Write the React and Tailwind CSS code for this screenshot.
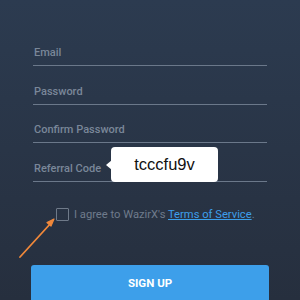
import React, { useState } from 'react';

const fields = ['Email', 'Password', 'Confirm Password', 'Referral Code'];

const App = () => {
    const [agreed, setAgreed] = useState(false);

    return (
        <div
            className="relative w-[300px] h-[300px] overflow-hidden bg-gradient-to-b from-[#2c3b50] to-[#262f3e]"
            style={{ fontFamily: 'Roboto, "Liberation Sans", sans-serif' }}
        >
            <div className="flex flex-col px-[33px] pt-[46px] gap-[18.5px]">
                {fields.map((f) => (
                    <div key={f} className="border-b border-[#6b788a] pb-[5px]">
                        <span className="block text-[11px] leading-[14px] font-medium text-[#7a8799] pl-px">{f}</span>
                    </div>
                ))}
            </div>

            <div className="flex items-center mt-[26px] ml-[56px] gap-[5px]">
                <button
                    type="button"
                    onClick={() => setAgreed(!agreed)}
                    className="w-[13px] h-[13px] border-[1.5px] border-[#6f7a89] rounded-[1px]"
                />
                <span className="text-[11.2px] leading-[14px] text-[#6f7b8c]">
                    I agree to WazirX's{' '}
                    <a href="#" className="text-[#3d9fea] underline">Terms of Service</a>
                    <span className="text-[#6f7b8c]">.</span>
                </span>
            </div>

            <div className="px-[31px] mt-[43px]">
                <button
                    type="button"
                    className="w-full h-[38px] rounded-[3px] bg-[#3d9fea] text-white text-[11.5px] font-bold"
                >
                    SIGN UP
                </button>
            </div>

            {/* referral code tooltip */}
            <div className="absolute left-[111px] top-[147px] w-[107px] h-[35px] bg-white rounded-[4px] flex items-center justify-center">
                <div className="absolute -left-[5px] top-[13px] w-0 h-0 border-y-[5px] border-y-transparent border-r-[6px] border-r-white" />
                <span
                    className="text-[16.5px] text-[#111]"
                    style={{ fontFamily: '"Liberation Sans", Arial, sans-serif' }}
                >
                    tcccfu9v
                </span>
            </div>

            {/* orange pointer arrow */}
            <svg className="absolute left-0 top-0" width="300" height="300" viewBox="0 0 300 300">
                <line x1="20" y1="257" x2="51" y2="223" stroke="#f0883a" strokeWidth="1.8" strokeLinecap="round" />
                <path d="M54 219 L47 222.5 L51 226 Z" fill="#f0883a" stroke="#f0883a" strokeWidth="1.2" strokeLinejoin="round" />
            </svg>
        </div>
    );
};

export default App;
